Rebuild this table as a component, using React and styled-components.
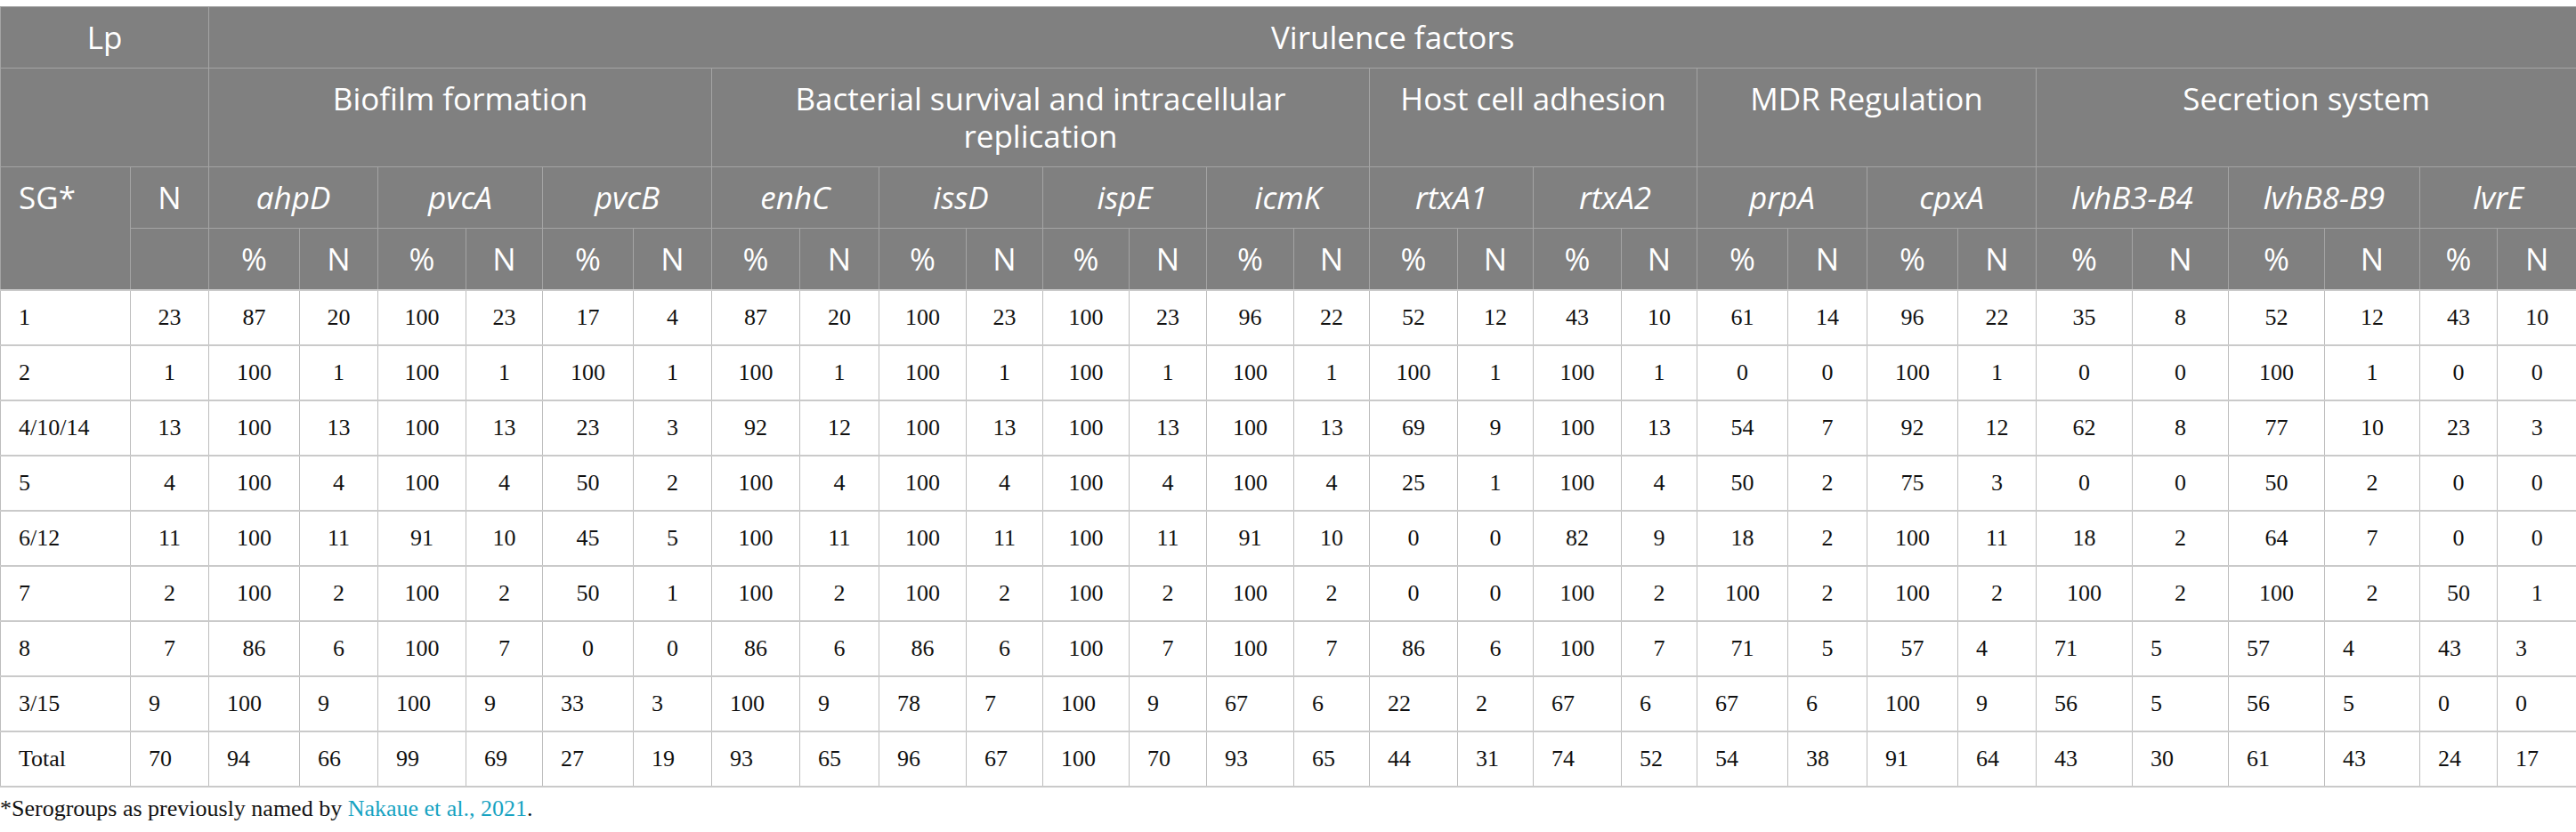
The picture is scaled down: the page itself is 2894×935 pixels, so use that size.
import React from 'react'
import styled, { createGlobalStyle } from 'styled-components'

const GlobalStyle = createGlobalStyle`
  body {
    margin: 0;
    background: #ffffff;
  }
`

const widths = [
  146, 88, 102, 88, 99, 86, 102, 88, 99, 89, 98, 86, 97, 87, 98, 85, 99, 85,
  99, 85, 102, 89, 102, 88, 108, 108, 108, 107, 87, 89,
]

const groups = [
  { title: 'Biofilm formation', genes: ['ahpD', 'pvcA', 'pvcB'] },
  {
    title: (
      <>
        Bacterial survival and intracellular
        <br />
        replication
      </>
    ),
    genes: ['enhC', 'issD', 'ispE', 'icmK'],
  },
  { title: 'Host cell adhesion', genes: ['rtxA1', 'rtxA2'] },
  { title: 'MDR Regulation', genes: ['prpA', 'cpxA'] },
  { title: 'Secretion system', genes: ['lvhB3-B4', 'lvhB8-B9', 'lvrE'] },
]

const genes = groups.flatMap(g => g.genes)

// leftFrom: index of the first value that sits left instead of centred
const rows = [
  { sg: '1', leftFrom: 99, v: '23 87 20 100 23 17 4 87 20 100 23 100 23 96 22 52 12 43 10 61 14 96 22 35 8 52 12 43 10' },
  { sg: '2', leftFrom: 99, v: '1 100 1 100 1 100 1 100 1 100 1 100 1 100 1 100 1 100 1 0 0 100 1 0 0 100 1 0 0' },
  { sg: '4/10/14', leftFrom: 99, v: '13 100 13 100 13 23 3 92 12 100 13 100 13 100 13 69 9 100 13 54 7 92 12 62 8 77 10 23 3' },
  { sg: '5', leftFrom: 99, v: '4 100 4 100 4 50 2 100 4 100 4 100 4 100 4 25 1 100 4 50 2 75 3 0 0 50 2 0 0' },
  { sg: '6/12', leftFrom: 99, v: '11 100 11 91 10 45 5 100 11 100 11 100 11 91 10 0 0 82 9 18 2 100 11 18 2 64 7 0 0' },
  { sg: '7', leftFrom: 99, v: '2 100 2 100 2 50 1 100 2 100 2 100 2 100 2 0 0 100 2 100 2 100 2 100 2 100 2 50 1' },
  { sg: '8', leftFrom: 22, v: '7 86 6 100 7 0 0 86 6 86 6 100 7 100 7 86 6 100 7 71 5 57 4 71 5 57 4 43 3' },
  { sg: '3/15', leftFrom: 0, v: '9 100 9 100 9 33 3 100 9 78 7 100 9 67 6 22 2 67 6 67 6 100 9 56 5 56 5 0 0' },
  { sg: 'Total', leftFrom: 0, v: '70 94 66 99 69 27 19 93 65 96 67 100 70 93 65 44 31 74 52 54 38 91 64 43 30 61 43 24 17' },
]

const Page = styled.div`
  padding-top: 7px;
`

const Table = styled.table`
  width: 2894px;
  border-collapse: collapse;
  table-layout: fixed;
`

const Col = styled.col`
  width: ${p => p.$w}px;
`

const HeadCell = styled.th`
  background: #808080;
  color: #ffffff;
  font-family: 'Open Sans', sans-serif;
  font-size: 35px;
  font-weight: 400;
  font-style: ${p => (p.$italic ? 'italic' : 'normal')};
  line-height: 42px;
  padding: 13px ${p => (p.$left ? '20px' : '6px')};
  text-align: ${p => (p.$left ? 'left' : 'center')};
  vertical-align: top;
  border: 1px solid #a4a4a4;
  white-space: nowrap;
`

const Cell = styled.td`
  font-family: 'Liberation Serif', 'Times New Roman', serif;
  font-size: 26px;
  color: #111111;
  line-height: 34px;
  padding: 13px 20px;
  text-align: ${p => (p.$left ? 'left' : 'center')};
  vertical-align: middle;
  border-left: 1px solid #bdbdbd;
  border-right: 1px solid #bdbdbd;
  border-top: 2px solid #cacaca;
  border-bottom: 2px solid #cacaca;
  white-space: nowrap;
`

const Footnote = styled.p`
  margin: 9px 0 0;
  font-family: 'Liberation Serif', 'Times New Roman', serif;
  font-size: 26px;
  color: #111111;
`

const Ref = styled.a`
  color: #17a3c2;
  text-decoration: none;
`

export default function App() {
  return (
    <Page>
      <GlobalStyle />
      <Table>
        <colgroup>
          {widths.map((w, i) => (
            <Col key={i} $w={w} />
          ))}
        </colgroup>
        <thead>
          <tr>
            <HeadCell colSpan={2}>Lp</HeadCell>
            <HeadCell colSpan={28}>Virulence factors</HeadCell>
          </tr>
          <tr>
            <HeadCell colSpan={2} />
            {groups.map((g, i) => (
              <HeadCell key={i} colSpan={g.genes.length * 2}>
                {g.title}
              </HeadCell>
            ))}
          </tr>
          <tr>
            <HeadCell rowSpan={2} $left>
              SG*
            </HeadCell>
            <HeadCell>N</HeadCell>
            {genes.map(g => (
              <HeadCell key={g} colSpan={2} $italic>
                {g}
              </HeadCell>
            ))}
          </tr>
          <tr>
            <HeadCell />
            {genes.map(g => (
              <React.Fragment key={g}>
                <HeadCell>%</HeadCell>
                <HeadCell>N</HeadCell>
              </React.Fragment>
            ))}
          </tr>
        </thead>
        <tbody>
          {rows.map(r => (
            <tr key={r.sg}>
              <Cell $left>{r.sg}</Cell>
              {r.v.split(' ').map((val, i) => (
                <Cell key={i} $left={i >= r.leftFrom}>
                  {val}
                </Cell>
              ))}
            </tr>
          ))}
        </tbody>
      </Table>
      <Footnote>
        *Serogroups as previously named by <Ref href="#">Nakaue et al., 2021</Ref>.
      </Footnote>
    </Page>
  )
}
